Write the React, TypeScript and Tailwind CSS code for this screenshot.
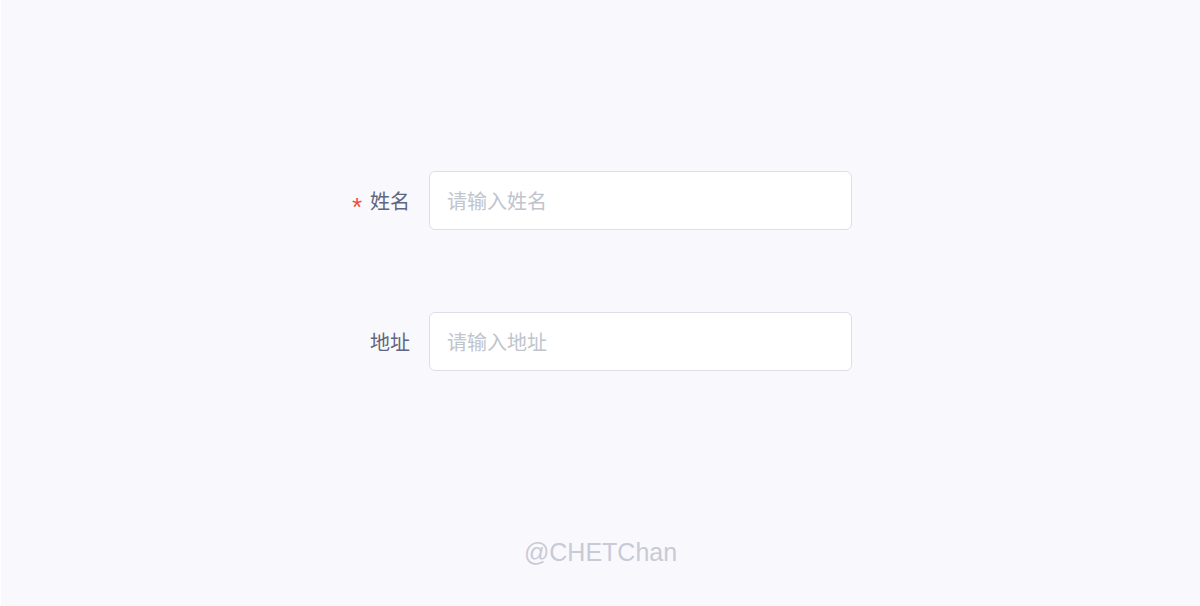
import React from 'react';

const fontStack = '"Noto Sans CJK SC", "Noto Sans", sans-serif';

interface FieldProps {
  label: string;
  placeholder: string;
  required?: boolean;
}

const Field: React.FC<FieldProps> = ({ label, placeholder, required }) => (
  <div className="flex items-center">
    <label className="w-[89px] pr-[19px] flex items-center justify-end text-[20px] text-[#5f6580] leading-none">
      {required && (
        <span
          className="text-[#ee4a45] mr-[8px] text-[26px] leading-none relative top-[6px]"
          style={{ fontFamily: '"Liberation Sans", Arial, sans-serif' }}
        >
          *
        </span>
      )}
      {label}
    </label>
    <input
      placeholder={placeholder}
      className="w-[423px] h-[59px] bg-white border border-[#dcdfe6] rounded-[6px] px-[17px] text-[20px] text-[#606266] placeholder:text-[#c0c4cc] outline-none"
    />
  </div>
);

export default function App() {
  return (
    <div className="w-[1200px] h-[606px] bg-[#f9f9fd] border-l border-l-white flex flex-col" style={{ fontFamily: fontStack }}>
      <div className="ml-[339px] mt-[171px] flex flex-col gap-[82px]">
        <Field label="姓名" placeholder="请输入姓名" required />
        <Field label="地址" placeholder="请输入地址" />
      </div>
      <div
        className="mt-[169px] text-center text-[25px] text-[#c8cad6] leading-none"
        style={{ fontFamily: '"Liberation Sans", Arial, sans-serif' }}
      >
        @CHETChan
      </div>
    </div>
  );
}
